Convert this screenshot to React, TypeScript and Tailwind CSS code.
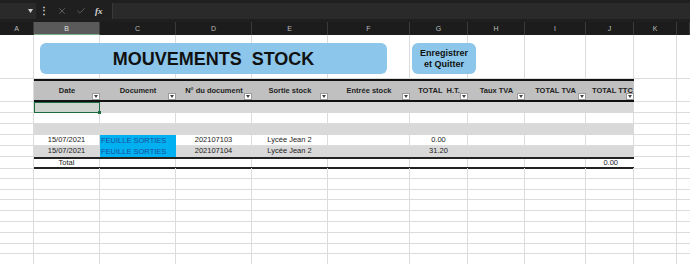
import { X, Check } from 'lucide-react'

const outerCols = 'grid grid-cols-[34px_600px_43px_1fr]'
const innerCols = 'grid grid-cols-[66px_76px_76px_76px_82px_58px_57px_61px_48px]'

const letters = ['A', 'B', 'C', 'D', 'E', 'F', 'G', 'H', 'I', 'J', 'K', '']
const widths = ['w-[34px]', 'w-[66px]', 'w-[76px]', 'w-[76px]', 'w-[76px]', 'w-[82px]', 'w-[58px]', 'w-[57px]', 'w-[61px]', 'w-[48px]', 'w-[43px]', 'flex-1']

const headers = ['Date', 'Document', 'N° du document', 'Sortie stock', 'Entrée stock', 'TOTAL  H.T.', 'Taux TVA', 'TOTAL TVA', 'TOTAL TTC']

function Cell({ className = '', children }: { className?: string; children?: React.ReactNode }) {
  return <div className={`border-r border-b border-[#dcdcdc] ${className}`}>{children}</div>
}

function FilterButton() {
  return (
    <div className="absolute right-0 bottom-0 w-[8px] h-[7px] bg-white border border-[#9a9a9a] flex items-center justify-center">
      <svg width="4" height="3" viewBox="0 0 4 3">
        <polygon points="0,0 4,0 2,3" fill="#444" />
      </svg>
    </div>
  )
}

// ligne vide de la feuille
function BlankRow({ h = 'h-[11px]' }: { h?: string }) {
  return (
    <div className={`${outerCols} ${h}`}>
      <Cell />
      <div className={innerCols}>
        {Array.from({ length: 9 }).map((_, i) => (
          <Cell key={i} />
        ))}
      </div>
      <Cell />
      <Cell className="border-r-0" />
    </div>
  )
}

function TableRow({ gray, children }: { gray?: boolean; children: React.ReactNode }) {
  return (
    <div className={`${outerCols} h-[11px]`}>
      <Cell />
      <div className={`${innerCols} ${gray ? 'bg-[#d9d9d9]' : ''}`}>{children}</div>
      <Cell />
      <Cell className="border-r-0" />
    </div>
  )
}

function DataRow({ gray, date, num, g }: { gray?: boolean; date: string; num: string; g: string }) {
  const c = gray ? 'border-r border-b border-[#d9d9d9]' : 'border-r border-b border-[#dcdcdc]'
  return (
    <TableRow gray={gray}>
      <div className={`${c} flex items-center justify-center`}>{date}</div>
      <div className="bg-[#00b0f0] flex items-center pl-[1px] text-[#1c4f9c]">FEUILLE SORTIES</div>
      <div className={`${c} flex items-center justify-center`}>{num}</div>
      <div className={`${c} flex items-center justify-center`}>Lycée Jean 2</div>
      <div className={c} />
      <div className={`${c} flex items-center justify-center`}>{g}</div>
      <div className={c} />
      <div className={c} />
      <div className={c} />
    </TableRow>
  )
}

export default function App() {
  return (
    <div className="w-[690px] h-[264px] overflow-hidden bg-white font-['Liberation_Sans',Arial,sans-serif] text-[7.5px] text-[#222] leading-none">
      {/* barre de formule */}
      <div className="h-[22px] bg-[#1f1f1f] flex items-center">
        <div className="w-[36px] h-[16px] bg-[#2a2a2a] flex items-center justify-end pr-[3px]">
          <svg width="5" height="4" viewBox="0 0 5 4">
            <polygon points="0,0 5,0 2.5,4" fill="#cfcfcf" />
          </svg>
        </div>
        <div className="w-[16px] flex justify-center text-[#cfcfcf] text-[10px] font-bold">⋮</div>
        <div className="w-[60px] h-[16px] flex items-center gap-[9px] pl-[5px]">
          <X size={10} color="#6a6a6a" strokeWidth={2} />
          <Check size={10} color="#6a6a6a" strokeWidth={2} />
          <span className="text-[#d6d6d6] italic font-bold text-[9px] font-['Liberation_Serif',serif]">fx</span>
        </div>
        <div className="flex-1 h-[16px] bg-[#2a2a2a] border-l border-[#3a3a3a]" />
      </div>

      {/* en-têtes de colonnes */}
      <div className="h-[13px] bg-[#1c1c1c] flex">
        {letters.map((l, i) => (
          <div
            key={i}
            className={`${widths[i]} h-full flex items-center justify-center text-[7px] border-r border-[#3a3a3a] ${
              l === 'B' ? 'bg-[#5a5a5a] text-[#e0e0e0] border-b border-b-[#7fae8b]' : 'text-[#bdbdbd]'
            }`}
          >
            {l}
          </div>
        ))}
      </div>

      <div className="relative">
        {/* ligne du titre */}
        <BlankRow h="h-[44px]" />

        {/* formes posées sur la feuille */}
        <div className="absolute left-[40px] top-[8px] w-[347px] h-[31px] rounded-[6px] bg-[#8cc6ea] flex items-center justify-center">
          <span className="whitespace-pre font-bold text-[18px] text-[#111]">MOUVEMENTS  STOCK</span>
        </div>
        <div className="absolute left-[412px] top-[8px] w-[64px] h-[31px] rounded-[6px] bg-[#8cc6ea] flex flex-col items-center justify-center gap-[2px] font-bold text-[9px] text-[#111]">
          <span>Enregistrer</span>
          <span>et Quitter</span>
        </div>

        {/* en-tête du tableau */}
        <div className={`${outerCols} h-[23px]`}>
          <Cell />
          <div className={`${innerCols} bg-[#c0c0c0] border-t-2 border-b-2 border-[#111]`}>
            {headers.map((h, i) => (
              <div key={h} className="relative overflow-hidden">
                <div
                  className={`h-full flex items-center whitespace-pre font-bold text-[7.5px] text-[#222] ${
                    i === 8 ? 'justify-start pl-[6px]' : 'justify-center'
                  }`}
                >
                  {h}
                </div>
                <FilterButton />
              </div>
            ))}
          </div>
          <Cell />
          <Cell className="border-r-0" />
        </div>

        {/* ligne sélectionnée */}
        <TableRow gray>
          <div className="relative border border-[#1d6b40] bg-[#cdd3cd]">
            <div className="absolute -right-[2px] -bottom-[2px] w-[3px] h-[3px] bg-[#1d6b40]" />
          </div>
          {Array.from({ length: 8 }).map((_, i) => (
            <div key={i} />
          ))}
        </TableRow>

        <TableRow>
          {Array.from({ length: 9 }).map((_, i) => (
            <Cell key={i} />
          ))}
        </TableRow>

        <TableRow gray>
          {Array.from({ length: 9 }).map((_, i) => (
            <div key={i} />
          ))}
        </TableRow>

        <DataRow date="15/07/2021" num="202107103" g="0.00" />
        <DataRow gray date="15/07/2021" num="202107104" g="31.20" />

        {/* ligne total */}
        <div className={`${outerCols} h-[11px]`}>
          <Cell />
          <div className={`${innerCols} border-t-2 border-b-2 border-[#222]`}>
            <div className="border-r border-[#dcdcdc] flex items-center justify-center">Total</div>
            {Array.from({ length: 7 }).map((_, i) => (
              <div key={i} className="border-r border-[#dcdcdc]" />
            ))}
            <div className="flex items-center justify-end pr-[16px]">0.00</div>
          </div>
          <Cell />
          <Cell className="border-r-0" />
        </div>

        {Array.from({ length: 10 }).map((_, i) => (
          <BlankRow key={i} h="h-[10.8px]" />
        ))}
      </div>
    </div>
  )
}
